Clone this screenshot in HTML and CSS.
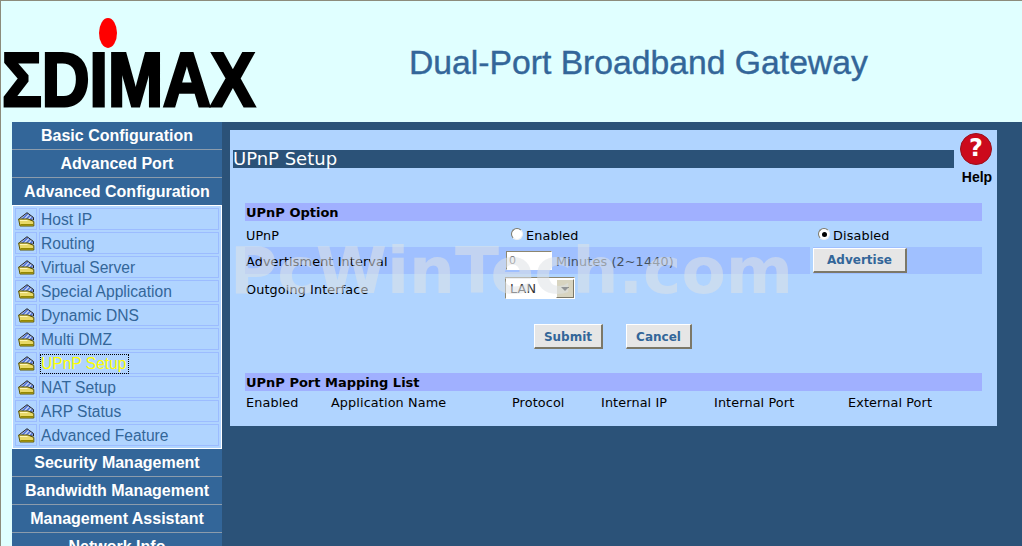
FILE: index.html
```html
<!DOCTYPE html>
<html lang="en">
  <head>
    <meta charset="UTF-8" />
    <title>UPnP Setup</title>
    <link rel="stylesheet" href="styles.css">
  </head>
  <body>
    <svg width="0" height="0" class="defs">
      <defs>
        <pattern id="hatch" width="3" height="3" patternUnits="userSpaceOnUse" patternTransform="rotate(-45)">
          <rect width="3" height="3" fill="#5c7cd8"/>
          <rect width="3" height="1" fill="#e8f0ff"/>
        </pattern>
      </defs>
      <symbol id="folder" viewBox="0 0 17 15">
        <path d="M1.5 6.5 L9 0.7 L15.5 5.5 L15.5 8 L1.5 8 Z" fill="url(#hatch)" stroke="#222" stroke-width="1"/>
        <path d="M0.6 7 L10 7 L15.8 9.5 L15.8 14 L2 14 Z" fill="#e8d868" stroke="#5c5400" stroke-width="1"/>
        <path d="M2.5 12.8 L15.2 12.8" stroke="#948800" stroke-width="1.6"/>
        <path d="M2 8.5 L9.5 8.5" stroke="#fff6b8" stroke-width="1"/>
      </symbol>
    </svg>

    <header class="top">
      <svg class="logo" width="258" height="108" viewBox="0 0 258 108">
        <ellipse cx="108" cy="32" rx="9" ry="15" fill="#ff0000"/>
        <text x="2" y="105" textLength="253" lengthAdjust="spacingAndGlyphs" class="logo-text">ΣDIMAX</text>
      </svg>
      <h1 class="title">Dual-Port Broadband Gateway</h1>
    </header>

    <div class="layout">
      <nav class="sidebar">
        <div class="nav-head">Basic Configuration</div>
        <div class="nav-head">Advanced Port</div>
        <div class="nav-head no-line">Advanced Configuration</div>
        <ul class="sub">
          <li><span class="ico"><svg width="17" height="15"><use href="#folder"/></svg></span><a href="#">Host IP</a></li>
          <li><span class="ico"><svg width="17" height="15"><use href="#folder"/></svg></span><a href="#">Routing</a></li>
          <li><span class="ico"><svg width="17" height="15"><use href="#folder"/></svg></span><a href="#">Virtual Server</a></li>
          <li><span class="ico"><svg width="17" height="15"><use href="#folder"/></svg></span><a href="#">Special Application</a></li>
          <li><span class="ico"><svg width="17" height="15"><use href="#folder"/></svg></span><a href="#">Dynamic DNS</a></li>
          <li><span class="ico"><svg width="17" height="15"><use href="#folder"/></svg></span><a href="#">Multi DMZ</a></li>
          <li><span class="ico"><svg width="17" height="15"><use href="#folder"/></svg></span><a href="#" class="current">UPnP Setup</a></li>
          <li><span class="ico"><svg width="17" height="15"><use href="#folder"/></svg></span><a href="#">NAT Setup</a></li>
          <li><span class="ico"><svg width="17" height="15"><use href="#folder"/></svg></span><a href="#">ARP Status</a></li>
          <li><span class="ico"><svg width="17" height="15"><use href="#folder"/></svg></span><a href="#">Advanced Feature</a></li>
        </ul>
        <div class="nav-head">Security Management</div>
        <div class="nav-head">Bandwidth Management</div>
        <div class="nav-head">Management Assistant</div>
        <div class="nav-head">Network Info</div>
      </nav>

      <main class="content">
        <section class="panel">
          <div class="panel-top">
            <h2 class="page-title">UPnP Setup</h2>
            <div class="help">
              <svg width="34" height="32" viewBox="0 0 34 32">
                <circle cx="17" cy="16" r="15.5" fill="#cc0a1c" stroke="#99101c" stroke-width="1"/>
                <text x="17" y="23" class="help-mark">?</text>
              </svg>
              <span>Help</span>
            </div>
          </div>

          <div class="bar">UPnP Option</div>
          <div class="row row-upnp">
            <div>UPnP</div>
            <div><input type="radio" name="upnp" class="radio"> Enabled</div>
            <div class="cell-disabled"><input type="radio" name="upnp" class="radio" checked> Disabled</div>
          </div>
          <div class="row row-adv">
            <div class="band">Advertisment Interval</div>
            <div class="band"><input type="text" class="num" value="0" disabled> <span class="hint">Minutes (2~1440)</span></div>
            <div class="band band-btn"><button class="btn btn-adv">Advertise</button></div>
          </div>
          <div class="row row-out">
            <div>Outgoing Interface</div>
            <div class="cell-select">
              <div class="select"><span>LAN</span><span class="arrow"></span></div>
            </div>
            <div></div>
          </div>

          <div class="actions">
            <button class="btn btn-submit">Submit</button>
            <button class="btn btn-cancel">Cancel</button>
          </div>

          <div class="bar">UPnP Port Mapping List</div>
          <div class="list-head">
            <span>Enabled</span>
            <span>Application Name</span>
            <span>Protocol</span>
            <span>Internal IP</span>
            <span>Internal Port</span>
            <span>External Port</span>
          </div>

          <div class="watermark">PcWinTech.com</div>
        </section>
      </main>
    </div>
  </body>
</html>
```

FILE: styles.css
```css
* {
  padding: 0;
  margin: 0;
  box-sizing: border-box;
}

html,
body {
  height: 546px;
  overflow: hidden;
}

body {
  background-color: #e0ffff;
  border-top: 1px solid #8c8c7c;
  border-left: 1px solid #8c8c7c;
  font-family: "DejaVu Sans", sans-serif;
  font-size: 12.8px;
  letter-spacing: 0.12px;
  color: #000;
}

.defs {
  position: absolute;
}

.top {
  height: 121px;
  display: flex;
}

.logo {
  display: block;
  margin-left: -1px;
  flex: none;
  overflow: visible;
}

.logo-text {
  font-family: "Liberation Sans", sans-serif;
  font-weight: bold;
  font-size: 76px;
  letter-spacing: 0;
  fill: #000;
  stroke: #000;
  stroke-width: 3px;
}

.title {
  margin-left: 151px;
  padding-top: 42px;
  font-family: "Liberation Sans", sans-serif;
  font-size: 33.7px;
  font-weight: normal;
  letter-spacing: 0;
  color: #336699;
  -webkit-text-stroke: 0.4px #336699;
  white-space: nowrap;
}

.layout {
  display: flex;
  height: 424px;
  padding-left: 11px;
}

.sidebar {
  width: 210px;
  flex: none;
  overflow: hidden;
  background-color: #336699;
  letter-spacing: 0;
}

.nav-head {
  height: 28px;
  border-bottom: 1px solid #8c9cac;
  line-height: 27px;
  text-align: center;
  font-family: "Liberation Sans", sans-serif;
  font-size: 16px;
  font-weight: bold;
  color: #fff;
  white-space: nowrap;
}

.no-line {
  border-bottom: none;
  height: 27px;
}

.sub {
  list-style: none;
  height: 244px;
  padding: 2px 2px 0 2px;
  background-color: #b0d4ff;
  border: 1px solid #fff;
  display: flex;
  flex-direction: column;
  gap: 2px;
}

.sub li {
  display: flex;
  gap: 2px;
  height: 22px;
}

.ico {
  width: 22px;
  flex: none;
  border: 1px solid #9cbcff;
  display: flex;
  align-items: center;
  justify-content: center;
}

.sub a {
  flex: 1;
  border: 1px solid #9cbcff;
  padding-left: 1px;
  line-height: 22px;
  font-family: "Liberation Sans", sans-serif;
  font-size: 15.6px;
  color: #336699;
  text-decoration: none;
  white-space: nowrap;
}

.sub a.current {
  color: #ffff00;
  position: relative;
}

.sub a.current::after {
  content: "";
  position: absolute;
  left: 0;
  top: 1px;
  width: 87px;
  height: 18px;
  border: 1px dotted #000;
}

.content {
  flex: 1;
  background-color: #2b5278;
  padding: 8px 0 0 8px;
}

.panel {
  position: relative;
  width: 767px;
  height: 296px;
  background-color: #b0d4ff;
  overflow: hidden;
}

.panel-top {
  display: flex;
  height: 73px;
  padding-left: 3px;
}

.page-title {
  width: 721px;
  height: 18px;
  margin-top: 20px;
  background-color: #2b5278;
  color: #fff;
  font-size: 18px;
  font-weight: normal;
  letter-spacing: 0;
  line-height: 18px;
}

.help {
  margin-left: 5px;
  margin-top: 3px;
  display: flex;
  flex-direction: column;
  align-items: center;
  font-family: "Liberation Sans", sans-serif;
  font-size: 14px;
  font-weight: bold;
  letter-spacing: 0;
  line-height: 14px;
}

.help span {
  margin-top: 5px;
  padding-left: 2px;
}

.help-mark {
  font-family: "DejaVu Sans", sans-serif;
  font-size: 24px;
  font-weight: bold;
  fill: #fff;
  text-anchor: middle;
}

.bar,
.row,
.list-head {
  margin-left: 15px;
  width: 737px;
}

.bar {
  height: 18px;
  padding-left: 1px;
  background-color: #a0b0ff;
  font-size: 13px;
  font-weight: bold;
  letter-spacing: 0;
  line-height: 20px;
}

.row {
  display: grid;
  grid-template-columns: 258px 307px 169px;
}

.row > div {
  padding-left: 1px;
  display: flex;
  align-items: center;
  white-space: nowrap;
}

.row > div:first-child {
  padding-top: 2px;
}

.row-upnp {
  height: 26px;
}

.row-adv {
  height: 27px;
  grid-template-columns: 258px 307px 3px 169px;
}

.row-out {
  height: 28px;
}

.band {
  background-color: #a0c0ff;
}

.row-adv .band-btn {
  grid-column: 4;
  padding-left: 0;
}

.radio {
  appearance: none;
  width: 12px;
  height: 12px;
  margin: -2px 3px 0 6px;
  border-radius: 50%;
  background-color: #fff;
  border: 1px solid #7c7868;
  border-right-color: #f0f0f0;
  border-bottom-color: #f0f0f0;
  position: relative;
}

.radio:checked::after {
  content: "";
  position: absolute;
  left: 2.5px;
  top: 2.5px;
  width: 5px;
  height: 5px;
  border-radius: 50%;
  background-color: #000;
}

.row-upnp > div:nth-child(2),
.row-upnp > div:nth-child(3) {
  padding-top: 2px;
  padding-left: 2px;
}

.num {
  width: 46px;
  height: 19px;
  margin-left: 2px;
  padding-left: 2px;
  border: 1px solid #fff;
  border-top-color: #8c8670;
  border-left-color: #8c8670;
  background-color: #fff;
  font-family: "DejaVu Sans", sans-serif;
  font-size: 11px;
  color: #6e6e6e;
}

.hint {
  margin-left: 4px;
  padding-top: 2px;
  color: #44505c;
}

.cell-select {
  padding-left: 2px;
}

.select {
  width: 70px;
  height: 22px;
  margin-left: 1px;
  padding-left: 4px;
  display: flex;
  align-items: center;
  justify-content: space-between;
  background-color: #fff;
  border: 1px solid #fff;
  border-top-color: #8c8670;
  border-left-color: #8c8670;
  color: #333;
}

.arrow {
  width: 18px;
  height: 19px;
  background-color: #d8d4c0;
  border: 1px solid #7c7868;
  border-top-color: #fff;
  border-left-color: #fff;
  position: relative;
}

.arrow::after {
  content: "";
  position: absolute;
  left: 4px;
  top: 7px;
  border-left: 4px solid transparent;
  border-right: 4px solid transparent;
  border-top: 4px solid #333;
}

.btn {
  height: 25px;
  background-color: #e6e6e6;
  border: 1px solid #fff;
  border-right: 2px solid #7c7868;
  border-bottom: 2px solid #7c7868;
  font-family: "DejaVu Sans", sans-serif;
  font-size: 12px;
  font-weight: bold;
  color: #336699;
}

.btn-adv {
  width: 94px;
}

.btn-submit {
  width: 69px;
  padding-top: 1px;
}

.btn-cancel {
  width: 66px;
  padding-top: 1px;
}

.actions {
  display: flex;
  gap: 23px;
  padding-left: 304px;
  padding-top: 22px;
  height: 71px;
}

.list-head {
  position: relative;
  height: 22px;
  line-height: 24px;
  display: grid;
  grid-template-columns: 85px 181px 89px 113px 134px 1fr;
  padding-left: 1px;
  white-space: nowrap;
}

.watermark {
  position: absolute;
  left: 0;
  top: 103px;
  font-family: "DejaVu Sans", sans-serif;
  font-size: 64.6px;
  font-weight: bold;
  letter-spacing: 0;
  line-height: 76px;
  color: rgba(222, 225, 230, 0.55);
  white-space: nowrap;
  pointer-events: none;
}
```
